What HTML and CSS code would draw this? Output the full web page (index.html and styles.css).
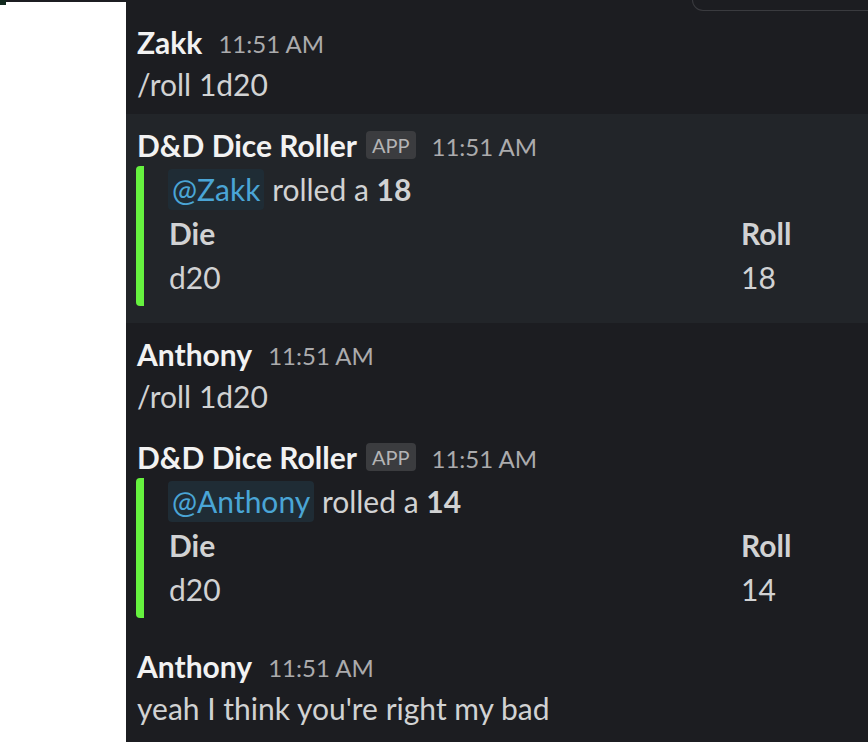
FILE: index.html
```html
<!DOCTYPE html>
<html>
<head>
<meta charset="utf-8">
<link rel="stylesheet" href="styles.css">
</head>
<body>
<div class="page">
  <aside class="side">
    <div class="side-top"><span class="side-mark"></span></div>
  </aside>
  <main class="chat">
    <div class="composer-edge"></div>

    <div class="msg">
      <div class="head"><span class="name">Zakk</span><span class="time">11:51 AM</span></div>
      <div class="text">/roll 1d20</div>
    </div>

    <div class="msg bot hl">
      <div class="head"><span class="name">D&amp;D Dice Roller</span><span class="badge">APP</span><span class="time">11:51 AM</span></div>
      <div class="attach">
        <div class="line"><span class="mention">@Zakk</span> rolled a <b>18</b></div>
        <div class="fields">
          <div class="fh">Die</div><div class="fh">Roll</div>
          <div class="fv">d20</div><div class="fv">18</div>
        </div>
      </div>
    </div>

    <div class="msg">
      <div class="head"><span class="name">Anthony</span><span class="time">11:51 AM</span></div>
      <div class="text">/roll 1d20</div>
    </div>

    <div class="msg bot">
      <div class="head"><span class="name">D&amp;D Dice Roller</span><span class="badge">APP</span><span class="time">11:51 AM</span></div>
      <div class="attach">
        <div class="line"><span class="mention">@Anthony</span> rolled a <b>14</b></div>
        <div class="fields">
          <div class="fh">Die</div><div class="fh">Roll</div>
          <div class="fv">d20</div><div class="fv">14</div>
        </div>
      </div>
    </div>

    <div class="msg">
      <div class="head"><span class="name">Anthony</span><span class="time">11:51 AM</span></div>
      <div class="text">yeah I think you're right my bad</div>
    </div>
  </main>
</div>
</body>
</html>
```

FILE: styles.css
```css
html, body {
  margin: 0;
  padding: 0;
  background: #ffffff;
}
body {
  font-family: Lato, "Noto Sans", sans-serif;
  width: 868px;
  height: 742px;
  overflow: hidden;
}
.page {
  display: flex;
  height: 742px;
}
.side {
  width: 126px;
  flex: none;
  background: #ffffff;
}
.side-top {
  height: 2px;
  background: #1c1d21;
  position: relative;
}
.side-mark {
  position: absolute;
  left: 0;
  top: 0;
  width: 6px;
  height: 5px;
  background: #12291f;
}
.chat {
  flex: 1;
  background: #1c1d21;
  display: flex;
  flex-direction: column;
  overflow: hidden;
}
.composer-edge {
  height: 10px;
  flex: none;
  align-self: flex-end;
  width: 200px;
  margin-right: -26px;
  border: 1px solid #3a3b3f;
  border-top: none;
  border-radius: 0 0 14px 14px;
}
.msg {
  padding: 10px 11px 9px 11px;
}
.msg.hl {
  background: #222529;
}
.head {
  display: flex;
  align-items: center;
  height: 42px;
}
.name {
  font-weight: 700;
  font-size: 30px;
  color: #f2f2f2;
}
.time {
  font-size: 24px;
  color: #ababad;
  margin-left: 16px;
  padding-top: 2px;
}
.badge {
  margin-left: 9px;
  background: #3b3c3f;
  color: #b4b4b5;
  font-size: 20px;
  line-height: 28px;
  height: 28px;
  padding: 0 6px;
  border-radius: 4px;
}
.badge + .time {
  margin-left: 16px;
}
.text {
  font-size: 30px;
  line-height: 42px;
  color: #d1d2d3;
}
.attach {
  margin: 0 0 8px -1px;
  border-left: 8px solid #66f23f;
  border-radius: 4px;
  padding: 1px 0 7px 25px;
  color: #d1d2d3;
  font-size: 30px;
  line-height: 44px;
}
.line b {
  font-weight: 700;
}
.mention {
  color: #4aa5d6;
  background: #1f2c35;
  border-radius: 4px;
  padding: 2px 4px 3px;
  margin-left: -1px;
}
.fields {
  display: grid;
  grid-template-columns: 572px 1fr;
}
.fh {
  font-weight: 700;
}
```
